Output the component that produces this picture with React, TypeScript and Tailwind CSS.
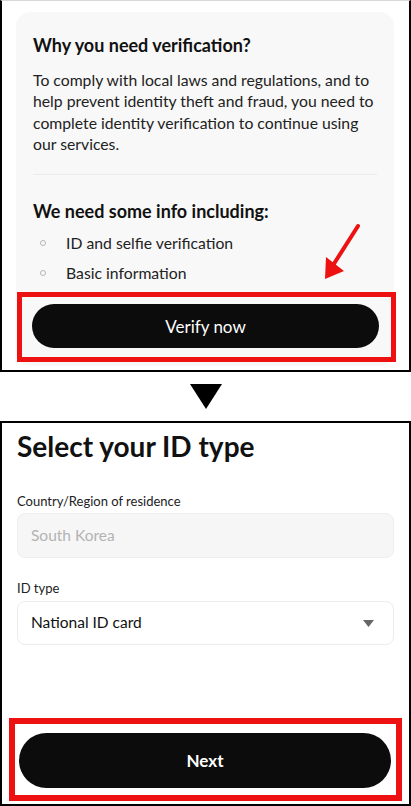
import React from "react";

export default function App() {
  const font = { fontFamily: "Lato, 'Open Sans', sans-serif" };
  return (
    <div className="w-[411px] h-[806px] bg-white flex flex-col" style={font}>
      {/* Top panel */}
      <div className="relative h-[372px] border-x-2 border-b-2 border-black border-t border-t-[#d8d8d8] bg-white">
        <div className="ml-[14px] mt-[11px] w-[378px] h-[354px] rounded-[14px] bg-[#f8f8f8] flex flex-col">
          <div className="px-[17px] pt-[21px]">
            <h2 className="text-[18px] leading-[24px] font-bold text-[#111]">Why you need verification?</h2>
            <p className="mt-[12px] text-[15.75px] leading-[21.3px] text-[#222]">
              To comply with local laws and regulations, and to help prevent identity theft and fraud, you need to complete identity verification to continue using our services.
            </p>
            <div className="mt-[20px] h-px bg-[#ececec]" />
            <h3 className="mt-[24px] text-[18px] leading-[24px] font-bold text-[#111]">We need some info including:</h3>
            <ul className="mt-[5px]">
              <li className="flex items-center h-[30px] text-[15.75px] text-[#222]">
                <span className="w-[6px] h-[6px] rounded-full border border-[#b5b5b5] ml-[7px] mr-[20px]" />
                ID and selfie verification
              </li>
              <li className="flex items-center h-[30px] text-[15.75px] text-[#222]">
                <span className="w-[6px] h-[6px] rounded-full border border-[#b5b5b5] ml-[7px] mr-[20px]" />
                Basic information
              </li>
            </ul>
          </div>
          <div className="mt-[4px] ml-[1px] mr-[-2px] border-[5px] border-[#ee1111] pl-[10px] pr-[12px] pt-[7px] pb-[9px]">
            <button className="w-full h-[44px] rounded-full bg-[#0c0c0c] text-white text-[17px] leading-none">
              Verify now
            </button>
          </div>
        </div>
        {/* red arrow annotation */}
        <svg className="absolute left-[314px] top-[218px]" width="50" height="66" viewBox="0 0 50 66">
          <line x1="42" y1="7" x2="14" y2="51" stroke="#ee1111" strokeWidth="4" strokeLinecap="round" />
          <polygon points="9,60 10,38 28,52" fill="#ee1111" />
        </svg>
      </div>

      {/* Down triangle */}
      <div className="h-[49px] flex items-center justify-center">
        <div className="w-0 h-0 border-l-[16px] border-r-[16px] border-t-[25px] border-l-transparent border-r-transparent border-t-black" />
      </div>

      {/* Bottom panel */}
      <div className="flex-1 border-2 border-black flex flex-col px-[15px]">
        <h1 className="pt-[7px] text-[28px] leading-[32px] font-bold text-[#111]">Select your ID type</h1>
        <label className="mt-[30px] text-[13px] leading-[18px] text-[#222]">Country/Region of residence</label>
        <div className="mt-[3px] h-[45px] rounded-[8px] bg-[#f6f6f6] border border-[#eeeeee] flex items-center px-[13px] text-[15.5px] text-[#b3b3b3]">
          South Korea
        </div>
        <label className="mt-[21px] text-[13px] leading-[18px] text-[#222]">ID type</label>
        <div className="mt-[4px] h-[44px] rounded-[8px] bg-white border border-[#ececec] flex items-center justify-between px-[13px] text-[15.5px] text-[#111]">
          <span>National ID card</span>
          <svg width="11" height="7" viewBox="0 0 11 7" className="mr-[6px]">
            <polygon points="0,0 11,0 5.5,7" fill="#666" />
          </svg>
        </div>
        <div className="mt-auto mb-[3px] mx-[-8px] border-[6px] border-[#ee1111] pl-[4px] pr-[5px] pt-[9px] pb-[7px]">
          <button className="w-full h-[55px] rounded-full bg-[#0c0c0c] text-white text-[17px] font-bold leading-none">
            Next
          </button>
        </div>
      </div>
    </div>
  );
}
